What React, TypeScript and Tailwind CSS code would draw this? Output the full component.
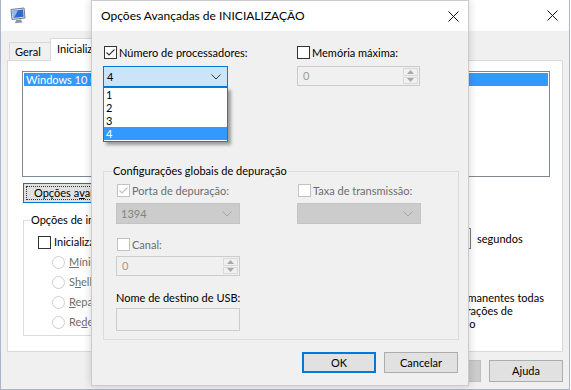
import React from 'react';

const Check = ({ checked = false, disabled = false }: { checked?: boolean; disabled?: boolean }) => (
  <span
    className={`flex h-[13px] w-[13px] shrink-0 items-center justify-center border bg-white ${
      disabled ? 'border-[#c2c2c2]' : 'border-[#333333]'
    }`}
  >
    {checked && (
      <svg width="11" height="11" viewBox="0 0 11 11">
        <path d="M1.5 5.5 L4 8 L9.5 2.5" fill="none" stroke={disabled ? '#c2c2c2' : '#333333'} strokeWidth="1.1" />
      </svg>
    )}
  </span>
);

const Radio = ({ children }: { children: React.ReactNode }) => (
  <div className="flex h-[20px] items-center gap-[4px] whitespace-nowrap text-[#6d6d6d]">
    <span className="h-[13px] w-[13px] shrink-0 rounded-full border border-[#cfcfcf] bg-white" />
    <span>{children}</span>
  </div>
);

const Chevron = ({ color }: { color: string }) => (
  <svg width="10" height="6" viewBox="0 0 10 6">
    <path d="M0.5 0.5 L5 5 L9.5 0.5" fill="none" stroke={color} strokeWidth="1" />
  </svg>
);

const SpinBox = ({ value, width }: { value: string; width: string }) => (
  <div className={`flex h-[20px] ${width} items-stretch border border-[#cccccc] bg-[#f0f0f0]`}>
    <span className="flex flex-1 items-center pl-[5px] text-[#9a9a9a]">{value}</span>
    <div className="flex w-[17px] flex-col gap-px p-px">
      <span className="flex flex-1 items-center justify-center border border-[#dadada]">
        <svg width="7" height="4" viewBox="0 0 7 4">
          <path d="M0 4 L3.5 0 L7 4Z" fill="#a8a8a8" />
        </svg>
      </span>
      <span className="flex flex-1 items-center justify-center border border-[#dadada]">
        <svg width="7" height="4" viewBox="0 0 7 4">
          <path d="M0 0 L3.5 4 L7 0Z" fill="#a8a8a8" />
        </svg>
      </span>
    </div>
  </div>
);

const CloseX = () => (
  <svg width="11" height="11" viewBox="0 0 11 11">
    <path d="M0.5 0.5 L10.5 10.5 M10.5 0.5 L0.5 10.5" stroke="#111111" strokeWidth="1" />
  </svg>
);

const MonitorIcon = () => (
  <svg width="18" height="17" viewBox="0 0 18 17">
    <path d="M2 2.5 L15 1 L16 11 L3 12.5Z" fill="#dfe6f2" stroke="#6f7a8c" />
    <path d="M3.5 3.8 L14 2.6 L14.7 9.8 L4.2 11Z" fill="#2e68d0" />
    <path d="M3.5 3.8 L9 3.2 L5 10.8 L4.2 11Z" fill="#8fbaf2" />
    <path d="M7 13 L12 12.4 L13.5 15.5 L6 16.2Z" fill="#8e97a6" />
  </svg>
);

const BgButton = ({ children, disabled = false }: { children: React.ReactNode; disabled?: boolean }) => (
  <div
    className={`flex h-[22px] w-[74px] items-center justify-center border ${
      disabled ? 'border-[#bfbfbf] bg-[#cccccc] text-[#838383]' : 'border-[#adadad] bg-[#e1e1e1]'
    }`}
  >
    {children}
  </div>
);

const BackgroundWindow = () => (
  <div className="flex h-[390px] w-[570px] flex-col border-x border-b border-[#a9b5c8]">
    {/* barra de título */}
    <div className="flex h-[31px] items-center justify-between bg-white pl-[8px] pr-[11px]">
      <MonitorIcon />
      <CloseX />
    </div>

    <div className="flex flex-1 flex-col bg-[#f0f0f0] px-[6px] pt-[7px]">
      {/* abas */}
      <div className="relative z-10 flex h-[22px] items-end pl-[2px]">
        <div className="flex h-[18px] w-[41px] items-center border border-r-0 border-b-0 border-[#d9d9d9] pl-[5px]">Geral</div>
        <div className="-mb-px flex h-[23px] w-[78px] items-center border border-b-0 border-[#d9d9d9] bg-white pl-[6px] pb-[2px]">Inicialização</div>
        <div className="flex h-[18px] w-[58px] items-center border border-l-0 border-b-0 border-[#d9d9d9] pl-[6px]">Serviços</div>
        <div className="flex h-[18px] w-[66px] items-center border border-l-0 border-b-0 border-[#d9d9d9] pl-[6px]">Inicializar</div>
        <div className="flex h-[18px] w-[76px] items-center border border-l-0 border-b-0 border-[#d9d9d9] pl-[6px]">Ferramentas</div>
      </div>

      {/* painel da aba */}
      <div className="flex h-[292px] flex-col border border-[#d9d9d9] bg-white pl-[14px] pt-[10px]">
        <div className="h-[106px] w-[528px] border border-[#828790] px-px pt-px">
          <div className="flex h-[13px] items-center whitespace-nowrap bg-[#3399ff] pl-[2px] text-white">
            Windows 10 (C:\WINDOWS) : Sistema operacional atual; Sistema operacional padrão
          </div>
        </div>

        <div className="ml-px mt-[6px] flex h-[20px] w-[120px] items-center border border-[#0078d7] bg-[#e1e1e1] p-[2px]">
          <span className="flex h-full w-full items-center whitespace-nowrap border border-dotted border-[#333333] pl-[7px]">
            Opções a<span className="underline">v</span>ançadas...
          </span>
        </div>

        <div className="mt-[10px] flex">
          <fieldset className="ml-px h-[123px] w-[370px] border border-[#dcdcdc]">
            <legend className="ml-[6px] px-px leading-[14px]">Opções de inicialização</legend>
            <div className="flex flex-col pl-[14px]">
              <div className="mt-[8px] flex h-[14px] items-center gap-[3px] whitespace-nowrap">
                <Check />
                <span>Inicializar com segurança</span>
              </div>
              <div className="ml-[14px] mt-[3px] flex flex-col">
                <Radio>
                  <span className="underline">M</span>ínimo
                </Radio>
                <Radio>
                  S<span className="underline">h</span>ell alternativo
                </Radio>
                <Radio>
                  <span className="underline">R</span>eparo do Active Directory
                </Radio>
                <Radio>
                  Re<span className="underline">d</span>e
                </Radio>
              </div>
            </div>
          </fieldset>

          <div className="ml-[8px] flex flex-col">
            <span className="h-[15px] leading-[14px]">Tempo limite:</span>
            <div className="flex items-center gap-[6px]">
              <div className="flex h-[21px] w-[70px] items-center border border-[#7a7a7a] pl-[4px]">30</div>
              <span>segundos</span>
            </div>
            <div className="mt-[42px] flex gap-[4px]">
              <Check />
              <div className="flex flex-col leading-[13px]">
                <span className="whitespace-nowrap">Tornar permanentes todas</span>
                <span className="whitespace-nowrap">as configurações de</span>
                <span className="whitespace-nowrap">inicialização</span>
              </div>
            </div>
          </div>
        </div>
      </div>

      {/* botões */}
      <div className="mt-[8px] flex justify-end gap-[8px]">
        <BgButton>OK</BgButton>
        <BgButton>Cancelar</BgButton>
        <BgButton disabled>Aplicar</BgButton>
        <BgButton>Ajuda</BgButton>
      </div>
    </div>
  </div>
);

const AdvancedDialog = () => (
  <div className="absolute left-[91px] top-0 z-20 flex h-[386px] w-[378px] flex-col border border-[#cbcbcb] bg-[#f0f0f0] shadow-[0_0_8px_rgba(0,0,0,0.18)]">
    <div className="flex h-[30px] items-center justify-between bg-white pl-[9px] pr-[9px]">
      <span className="text-[12px]">Opções Avançadas de INICIALIZAÇÃO</span>
      <CloseX />
    </div>

    <div className="relative flex flex-1 flex-col pl-[11px] pr-[10px] pt-[15px]">
      <div className="flex gap-[69px]">
        <div className="flex w-[125px] flex-col">
          <div className="ml-px flex h-[13px] items-center gap-[2px] whitespace-nowrap">
            <Check checked />
            <span>Número de processadores:</span>
          </div>
          <div className="mt-[7px] flex h-[21px] items-center justify-between border border-[#0078d7] bg-[#cce4f7] pl-[3px] pr-[6px]">
            <span>4</span>
            <Chevron color="#333333" />
          </div>
        </div>
        <div className="flex w-[123px] flex-col">
          <div className="flex h-[13px] items-center gap-[2px] whitespace-nowrap">
            <Check />
            <span>Memória máxima:</span>
          </div>
          <div className="mt-[7px]">
            <SpinBox value="0" width="w-[123px]" />
          </div>
        </div>
      </div>

      <fieldset className="mt-[77px] h-[176px] w-[356px] border border-[#dcdcdc]">
        <legend className="ml-[8px] px-px leading-[14px]">Configurações globais de depuração</legend>
        <div className="flex flex-col pl-[12px]">
          <div className="mt-[6px] flex gap-[57px]">
            <div className="flex w-[124px] flex-col">
              <div className="ml-px flex h-[13px] items-center gap-[2px] whitespace-nowrap text-[#6d6d6d]">
                <Check checked disabled />
                <span>Porta de depuração:</span>
              </div>
              <div className="mt-[6px] flex h-[21px] items-center justify-between border border-[#c4c4c4] bg-[#cccccc] pl-[4px] pr-[7px] text-[#838383]">
                <span>1394</span>
                <Chevron color="#a6a6a6" />
              </div>
            </div>
            <div className="flex w-[124px] flex-col">
              <div className="ml-px flex h-[13px] items-center gap-[2px] whitespace-nowrap text-[#6d6d6d]">
                <Check disabled />
                <span>Taxa de transmissão:</span>
              </div>
              <div className="mt-[6px] flex h-[21px] items-center justify-end border border-[#c4c4c4] bg-[#cccccc] pr-[7px]">
                <Chevron color="#a6a6a6" />
              </div>
            </div>
          </div>

          <div className="ml-px mt-[14px] flex h-[13px] items-center gap-[2px] text-[#6d6d6d]">
            <Check disabled />
            <span>Canal:</span>
          </div>
          <div className="mt-[5px]">
            <SpinBox value="0" width="w-[124px]" />
          </div>

          <div className="mt-[15px] h-[14px] leading-[14px]">Nome de destino de USB:</div>
          <div className="mt-[3px] h-[23px] w-[124px] border border-[#cccccc] bg-[#f0f0f0]" />
        </div>
      </fieldset>

      <div className="mt-[12px] flex justify-end gap-[8px]">
        <div className="flex h-[21px] w-[74px] items-center justify-center border-2 border-[#0078d7] bg-[#e1e1e1]">OK</div>
        <div className="flex h-[21px] w-[74px] items-center justify-center border border-[#adadad] bg-[#e1e1e1]">Cancelar</div>
      </div>

      {/* lista aberta da caixa de combinação */}
      <div className="absolute left-[11px] top-[56px] flex w-[125px] flex-col border border-[#646464] bg-white pb-px shadow-[3px_3px_3px_rgba(0,0,0,0.35)]">
        <div className="flex h-[13px] items-center pl-[2px]">1</div>
        <div className="flex h-[13px] items-center pl-[2px]">2</div>
        <div className="flex h-[13px] items-center pl-[2px]">3</div>
        <div className="flex h-[13px] items-center bg-[#3399ff] pl-[2px] text-white">4</div>
      </div>
    </div>
  </div>
);

export default function App() {
  return (
    <div className="relative h-[390px] w-[571px] overflow-hidden bg-white font-['Lato',sans-serif] text-[11px] leading-[14px] text-black">
      <BackgroundWindow />
      <AdvancedDialog />
    </div>
  );
}
